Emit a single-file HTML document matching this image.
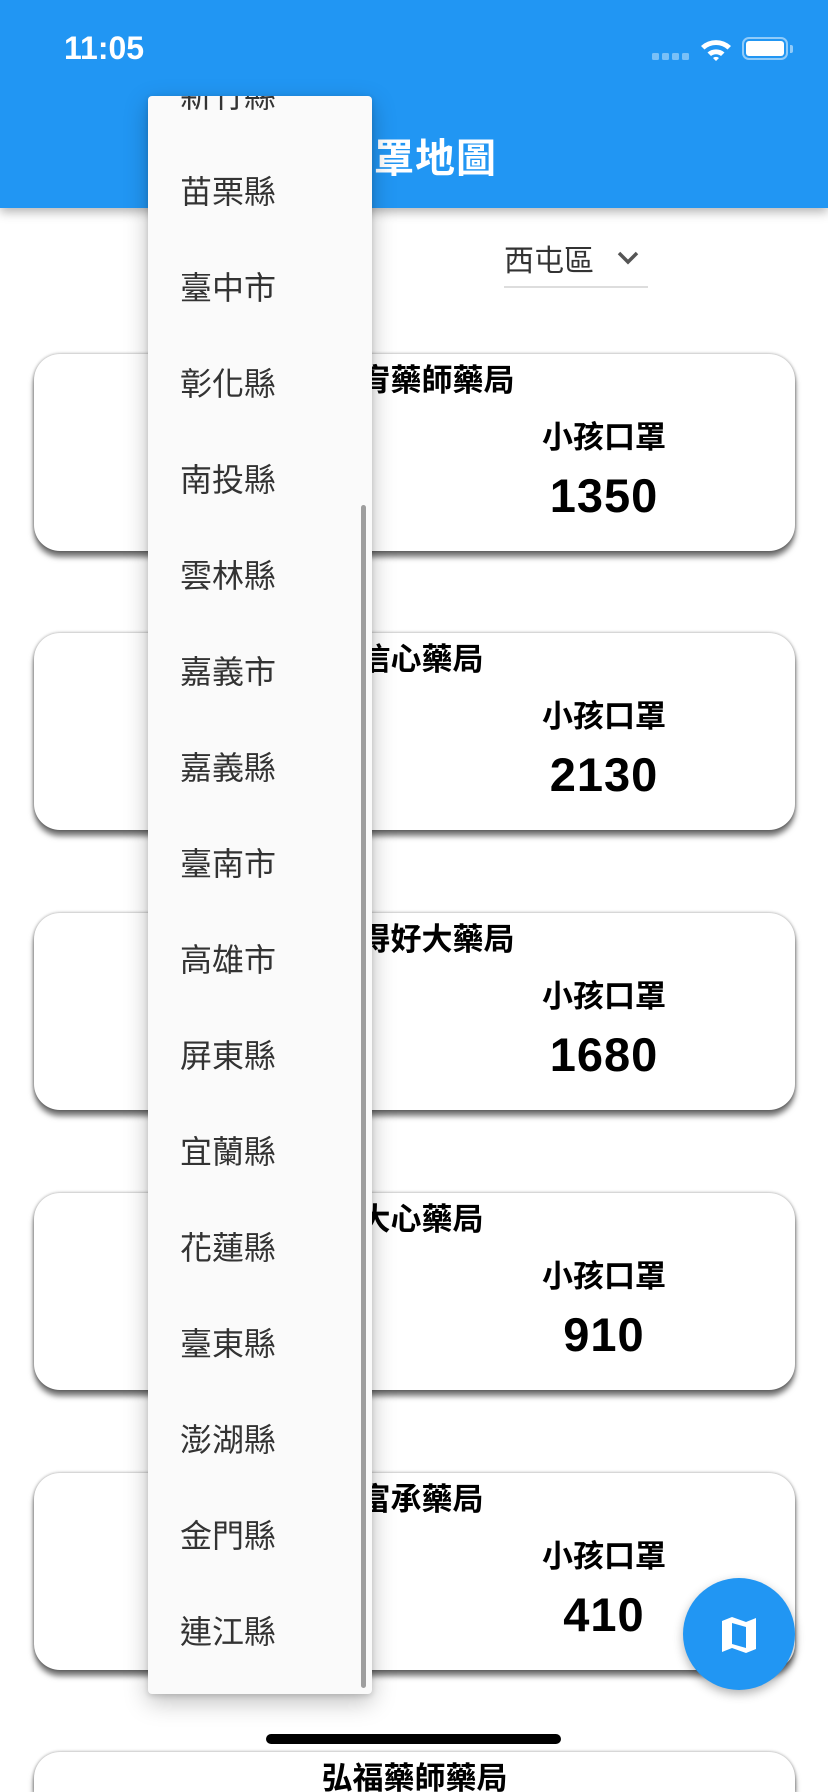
<!DOCTYPE html>
<html><head><meta charset="utf-8">
<style>
*{margin:0;padding:0;box-sizing:border-box}
html,body{width:828px;height:1792px;overflow:hidden;background:#fff;font-family:"Liberation Sans","Noto Sans CJK TC",sans-serif}
#wrap{position:relative;width:828px;height:1792px;overflow:hidden}
.bar{position:absolute;left:0;top:0;width:828px;height:208px;background:#2196F3;box-shadow:0 4px 10px rgba(0,0,0,.3);z-index:2}
.time{position:absolute;left:64px;top:30px;color:#fff;font-size:32px;font-weight:600}
.title{position:absolute;left:333px;top:126px;color:#fff;font-size:40px;font-weight:700;letter-spacing:1px}
.dd{position:absolute;left:504px;top:236px;font-size:30px;color:#333}
.dd svg{position:absolute;left:112px;top:14px}
.ul{position:absolute;left:504px;top:286px;width:144px;height:2px;background:#ddd}
.card{position:absolute;left:34px;width:761px;height:197px;background:#fff;border-radius:26px;box-shadow:0 6px 6px rgba(0,0,0,.55),0 0 3px rgba(0,0,0,.4)}
.card .n{position:absolute;left:0;right:0;top:1px;text-align:center;font-size:31px;font-weight:600;color:#000;padding-left:14px}
.card .k{position:absolute;left:490px;width:160px;top:58px;text-align:center;font-size:31px;font-weight:600;color:#000}
.card .v{position:absolute;left:490px;width:160px;top:114px;text-align:center;font-size:47px;font-weight:700;color:#000;letter-spacing:1px}
.menu{position:absolute;left:148px;top:96px;width:224px;height:1598px;background:#fafafa;border-radius:4px;box-shadow:0 8px 24px rgba(0,0,0,.25),0 2px 6px rgba(0,0,0,.15);overflow:hidden;z-index:5}
.menu .it{position:absolute;left:32px;font-size:32px;color:#333;line-height:40px;height:40px}
.menu .sb{position:absolute;left:213px;top:409px;width:5px;height:1183px;background:#9e9e9e;border-radius:3px}
.fab{position:absolute;left:683px;top:1578px;width:112px;height:112px;border-radius:50%;background:#2196F3;box-shadow:0 4px 10px rgba(0,0,0,.3);z-index:6}
.home{position:absolute;left:266px;top:1734px;width:295px;height:10px;border-radius:5px;background:#000;z-index:7}
</style></head><body><div id="wrap">
<div class="bar">
<div class="time">11:05</div>
<svg style="position:absolute;left:652px;top:53px" width="40" height="8"><g fill="#fff" opacity=".4"><rect x="0" y="0" width="7" height="7" rx="1.5"/><rect x="10" y="0" width="7" height="7" rx="1.5"/><rect x="20" y="0" width="7" height="7" rx="1.5"/><rect x="30" y="0" width="7" height="7" rx="1.5"/></g></svg>
<svg style="position:absolute;left:699px;top:38px" width="34" height="24" viewBox="0 0 34 24"><path d="M2 8 A22 22 0 0 1 32 8 L28.5 11.5 A17 17 0 0 0 5.5 11.5Z M8.5 14.5 A13 13 0 0 1 25.5 14.5 L22 18 A8 8 0 0 0 12 18Z M14 20 A4.5 4.5 0 0 1 20 20 L17 23Z" fill="#fff"/></svg>
<div style="position:absolute;left:742px;top:37px;width:46px;height:23px;border:2px solid rgba(255,255,255,.5);border-radius:7px"><div style="position:absolute;left:2px;top:2px;right:2px;bottom:2px;background:#fff;border-radius:3px"></div></div>
<div style="position:absolute;left:790px;top:45px;width:3px;height:8px;background:rgba(255,255,255,.5);border-radius:0 2px 2px 0"></div>
<div class="title">口罩地圖</div>
</div>
<div class="dd">西屯區<svg width="24" height="16" viewBox="0 0 24 16"><path d="M3 3 L12 12 L21 3" stroke="#555" stroke-width="3.5" fill="none"/></svg></div>
<div class="ul"></div>

<div class="card" style="top:354px"><div class="n">大宥藥師藥局</div><div class="k">小孩口罩</div><div class="v">1350</div></div>
<div class="card" style="top:633px"><div class="n">信心藥局</div><div class="k">小孩口罩</div><div class="v">2130</div></div>
<div class="card" style="top:913px"><div class="n">佑得好大藥局</div><div class="k">小孩口罩</div><div class="v">1680</div></div>
<div class="card" style="top:1193px"><div class="n">大心藥局</div><div class="k">小孩口罩</div><div class="v">910</div></div>
<div class="card" style="top:1473px"><div class="n">富承藥局</div><div class="k">小孩口罩</div><div class="v">410</div></div>
<div class="card" style="top:1752px;height:40px;border-radius:26px 26px 0 0"><div class="n" style="padding-left:0">弘福藥師藥局</div></div>

<div class="menu">
<div class="it" style="top:-20px">新竹縣</div>
<div class="it" style="top:76px">苗栗縣</div>
<div class="it" style="top:172px">臺中市</div>
<div class="it" style="top:268px">彰化縣</div>
<div class="it" style="top:364px">南投縣</div>
<div class="it" style="top:460px">雲林縣</div>
<div class="it" style="top:556px">嘉義市</div>
<div class="it" style="top:652px">嘉義縣</div>
<div class="it" style="top:748px">臺南市</div>
<div class="it" style="top:844px">高雄市</div>
<div class="it" style="top:940px">屏東縣</div>
<div class="it" style="top:1036px">宜蘭縣</div>
<div class="it" style="top:1132px">花蓮縣</div>
<div class="it" style="top:1228px">臺東縣</div>
<div class="it" style="top:1324px">澎湖縣</div>
<div class="it" style="top:1420px">金門縣</div>
<div class="it" style="top:1516px">連江縣</div>
<div class="sb"></div>
</div>

<div class="fab"><svg style="position:absolute;left:37px;top:37px" width="38" height="40" viewBox="0 0 38 40"><path d="M2 6 L12 2 L26 7 L36 3 L36 34 L26 38 L12 33 L2 37Z M12 8 L12 29 L26 33 L26 12Z" fill="#fff" fill-rule="evenodd"/></svg></div>
<div class="home"></div>
</div></body></html>
